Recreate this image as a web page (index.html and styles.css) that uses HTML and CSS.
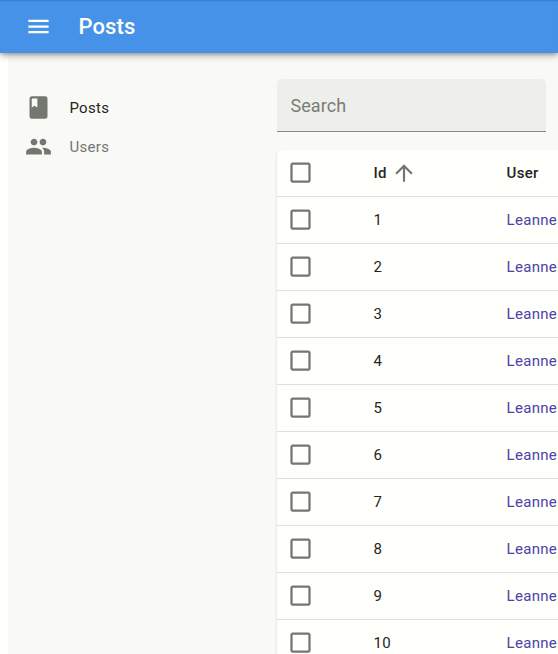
FILE: index.html
```html
<!DOCTYPE html>
<html lang="en">
<head>
<meta charset="utf-8">
<title>Posts</title>
<link rel="stylesheet" href="styles.css">
</head>
<body>
<svg class="defs" aria-hidden="true">
  <symbol id="box" viewBox="0 0 24 24"><path d="M19 5v14H5V5h14m0-2H5c-1.100 0-2 .9-2 2v14c0 1.100.9 2 2 2h14c1.100 0 2-.9 2-2V5c0-1.100-.9-2-2-2z"/></symbol>
</svg>
<header class="appbar">
  <svg class="icon menu-icon" viewBox="0 0 24 24"><path d="M3 18h18v-2H3v2zm0-5h18v-2H3v2zm0-7v2h18V6H3z"/></svg>
  <h1 class="title">Posts</h1>
</header>
<div class="layout">
  <nav class="sidebar">
    <a class="nav-item active"><svg class="icon" viewBox="0 0 24 24"><path d="M18 2H6c-1.100 0-2 .9-2 2v16c0 1.100.9 2 2 2h12c1.100 0 2-.9 2-2V4c0-1.100-.9-2-2-2zM6 4h5v8l-2.500-1.500L6 12V4z"/></svg><span>Posts</span></a>
    <a class="nav-item"><svg class="icon" viewBox="0 0 24 24"><path d="M16 11c1.660 0 2.990-1.340 2.990-3S17.660 5 16 5c-1.660 0-3 1.340-3 3s1.340 3 3 3zm-8 0c1.660 0 2.990-1.340 2.990-3S9.660 5 8 5C6.340 5 5 6.340 5 8s1.340 3 3 3zm0 2c-2.330 0-7 1.170-7 3.500V19h14v-2.500c0-2.330-4.670-3.500-7-3.500zm8 0c-.29 0-.62.02-.97.05 1.160.84 1.970 1.970 1.970 3.450V19h6v-2.500c0-2.330-4.670-3.500-7-3.500z"/></svg><span>Users</span></a>
  </nav>
  <main class="content">
    <div class="search">Search</div>
    <div class="card">
      <div class="row head"><svg class="check"><use href="#box"/></svg><span class="id">Id<svg class="sort" viewBox="0 0 24 24"><path d="M4 12l1.410 1.410L11 7.830V20h2V7.830l5.580 5.590L20 12l-8-8-8 8z"/></svg></span><span>User</span></div>
      <div class="row"><svg class="check"><use href="#box"/></svg><span class="id">1</span><a>Leanne</a></div>
      <div class="row"><svg class="check"><use href="#box"/></svg><span class="id">2</span><a>Leanne</a></div>
      <div class="row"><svg class="check"><use href="#box"/></svg><span class="id">3</span><a>Leanne</a></div>
      <div class="row"><svg class="check"><use href="#box"/></svg><span class="id">4</span><a>Leanne</a></div>
      <div class="row"><svg class="check"><use href="#box"/></svg><span class="id">5</span><a>Leanne</a></div>
      <div class="row"><svg class="check"><use href="#box"/></svg><span class="id">6</span><a>Leanne</a></div>
      <div class="row"><svg class="check"><use href="#box"/></svg><span class="id">7</span><a>Leanne</a></div>
      <div class="row"><svg class="check"><use href="#box"/></svg><span class="id">8</span><a>Leanne</a></div>
      <div class="row"><svg class="check"><use href="#box"/></svg><span class="id">9</span><a>Leanne</a></div>
      <div class="row"><svg class="check"><use href="#box"/></svg><span class="id">10</span><a>Leanne</a></div>
    </div>
  </main>
</div>
</body>
</html>
```
FILE: styles.css
```css
* { box-sizing: border-box; }
body {
  margin: 0;
  height: 654px;
  overflow: hidden;
  display: flex;
  flex-direction: column;
  background: #fffffc;
  color: #242422;
  font: 15px/22px Roboto, sans-serif;
  letter-spacing: 0.32px;
}
svg { display: block; flex: none; fill: #747670; }
.defs { position: absolute; width: 0; height: 0; }
.icon { width: 27px; height: 27px; }
.appbar {
  flex: none;
  height: 53px;
  padding-left: 25px;
  display: flex;
  align-items: center;
  gap: 26.4px;
  position: relative;
  z-index: 1;
  background: #4792e9;
  color: #fffffc;
  box-shadow: 0 2px 4px -1px rgba(0,0,0,.3), 0 4px 6px rgba(0,0,0,.13), 0 1px 11px rgba(0,0,0,.1), inset 0 2px 2px -1px rgba(0,0,0,.16);
}
.menu-icon { fill: #fffffc; }
.title { margin: 0; font-size: 22px; font-weight: 500; line-height: 30px; letter-spacing: 0.12px; }
.layout {
  flex: 1;
  min-height: 0;
  margin-left: 8px;
  display: flex;
  background: #f9faf6;
}
.sidebar { flex: none; width: 269px; padding-top: 35px; }
.nav-item {
  height: 39px;
  padding-left: 17px;
  display: flex;
  align-items: center;
  gap: 17.4px;
  color: #747571;
}
.nav-item.active { color: #242422; }
.content { flex: 1; min-width: 0; padding-top: 26px; }
.search {
  width: 269px;
  height: 53px;
  padding-left: 13.4px;
  border-bottom: 1px solid #868a82;
  border-radius: 5px 5px 0 0;
  background: #eeefeb;
  color: #7a7b77;
  font-size: 18px;
  line-height: 53px;
  letter-spacing: 0.1px;
}
.card {
  margin-top: 18px;
  border-radius: 5px 0 0 0;
  background: #fffffc;
  box-shadow: 0 2px 1px -1px rgba(0,0,0,.2), 0 1px 1px rgba(0,0,0,.14), 0 1px 3px rgba(0,0,0,.12);
}
.row {
  height: 47px;
  padding-left: 9.5px;
  display: grid;
  grid-template-columns: 87px 133px 1fr;
  align-items: center;
  border-bottom: 1px solid #dfe0dc;
}
.row a { color: #4b43a5; }
.head { font-weight: 500; }
.check { width: 27px; height: 27px; margin-bottom: 1px; }
.id { display: flex; align-items: center; gap: 4px; }
.sort { width: 26px; height: 26px; margin-bottom: 1px; }
```
